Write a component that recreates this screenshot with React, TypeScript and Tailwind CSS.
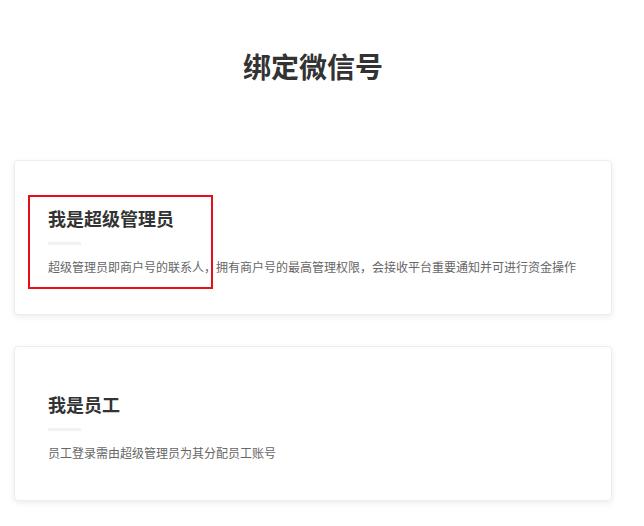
const FONT = { fontFamily: '"Microsoft YaHei", "Noto Sans CJK SC", "Noto Sans", sans-serif' };

const ROLES = [
  {
    id: "admin",
    title: "我是超级管理员",
    desc: "超级管理员即商户号的联系人，拥有商户号的最高管理权限，会接收平台重要通知并可进行资金操作",
    highlight: true,
  },
  {
    id: "staff",
    title: "我是员工",
    desc: "员工登录需由超级管理员为其分配员工账号",
    highlight: false,
  },
];

function RoleCard({ title, desc, highlight }: { title: string; desc: string; highlight: boolean }) {
  return (
    <div className="relative mx-[14px] rounded border border-[#ededed] bg-white px-[33px] pt-[45px] pb-[38px] shadow-[0_2px_6px_rgba(0,0,0,0.08)]">
      <h2 className="text-[18px] leading-[24px] font-bold text-[#333]">{title}</h2>
      <div className="mt-[12px] h-[3px] w-[33px] bg-[#f2f2f2]" />
      <p className="mt-[13px] text-[12px] leading-[18px] text-[#666]">{desc}</p>
      {highlight && (
        <div className="pointer-events-none absolute left-[13px] top-[34px] h-[94px] w-[185px] border-2 border-[#e50f1a]" />
      )}
    </div>
  );
}

export default function App() {
  return (
    <div className="min-h-[526px] w-[626px] bg-white" style={FONT}>
      <h1 className="pt-[46px] text-center text-[28px] leading-[40px] font-bold text-[#333]">绑定微信号</h1>
      <div className="mt-[74px] flex flex-col gap-[31px]">
        {ROLES.map((r) => (
          <RoleCard key={r.id} title={r.title} desc={r.desc} highlight={r.highlight} />
        ))}
      </div>
    </div>
  );
}
